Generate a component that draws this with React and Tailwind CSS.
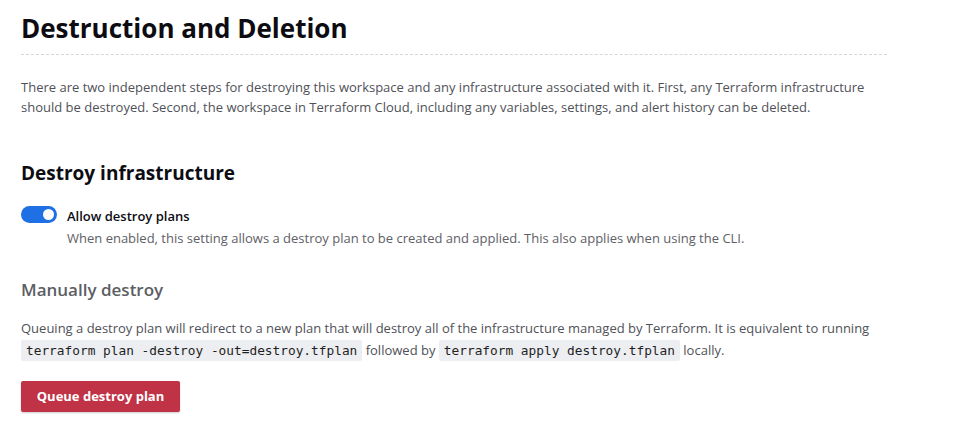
import React, { useState } from 'react';

function Toggle({ on, onChange }) {
    return (
        <button
            type="button"
            onClick={() => onChange(!on)}
            className={`mt-[1px] flex h-[17px] w-[36px] shrink-0 items-center rounded-full px-[3px] ${on ? 'justify-end bg-[#1f6fe5]' : 'justify-start bg-gray-300'}`}
        >
            <span className="h-[11px] w-[11px] rounded-full bg-white" />
        </button>
    );
}

function Code({ children }) {
    return (
        <code className="rounded-[2px] bg-[#eceef1] px-[5px] py-[3px] text-[12.8px] text-[#1f1f24]" style={{ fontFamily: '"DejaVu Sans Mono", monospace' }}>
            {children}
        </code>
    );
}

export default function App() {
    const [allowDestroy, setAllowDestroy] = useState(true);

    return (
        <div className="min-h-[447px] bg-white pl-[21px] pt-[10px] text-[#4f5158]" style={{ fontFamily: '"Open Sans", "Noto Sans", sans-serif' }}>
            <div className="w-[866px]">
                <h1 className="border-b border-dashed border-[#d6d7da] pb-[8px] text-[26px] font-bold leading-[36px] text-[#0c0c12]">
                    Destruction and Deletion
                </h1>
                <p className="mt-[22px] text-[13px] leading-[20px]">
                    There are two independent steps for destroying this workspace and any infrastructure associated with it. First, any Terraform infrastructure should be destroyed. Second, the workspace in Terraform Cloud, including any variables, settings, and alert history can be deleted.
                </p>

                <h2 className="mt-[42px] text-[19px] font-bold leading-[28px] text-[#0c0c12]">Destroy infrastructure</h2>
                <div className="mt-[18px] flex gap-[10px]">
                    <Toggle on={allowDestroy} onChange={setAllowDestroy} />
                    <div>
                        <div className="text-[13px] font-semibold leading-[22px] text-[#0c0c12]">Allow destroy plans</div>
                        <div className="text-[13px] leading-[22px] text-[#5e6066]">
                            When enabled, this setting allows a destroy plan to be created and applied. This also applies when using the CLI.
                        </div>
                    </div>
                </div>

                <h3 className="mt-[28px] text-[17px] font-semibold leading-[26px] text-[#5c5e64]">Manually destroy</h3>
                <p className="mt-[14px] text-[13px] leading-[22px]">
                    Queuing a destroy plan will redirect to a new plan that will destroy all of the infrastructure managed by Terraform. It is equivalent to running{' '}
                    <Code>terraform plan -destroy -out=destroy.tfplan</Code> followed by <Code>terraform apply destroy.tfplan</Code> locally.
                </p>

                <button
                    type="button"
                    className="mt-[19px] h-[31px] w-[159px] rounded-[2px] bg-[#c03246] text-[13px] font-bold text-white shadow-[0_1px_2px_rgba(0,0,0,0.2)]"
                >
                    Queue destroy plan
                </button>
            </div>
        </div>
    );
}
